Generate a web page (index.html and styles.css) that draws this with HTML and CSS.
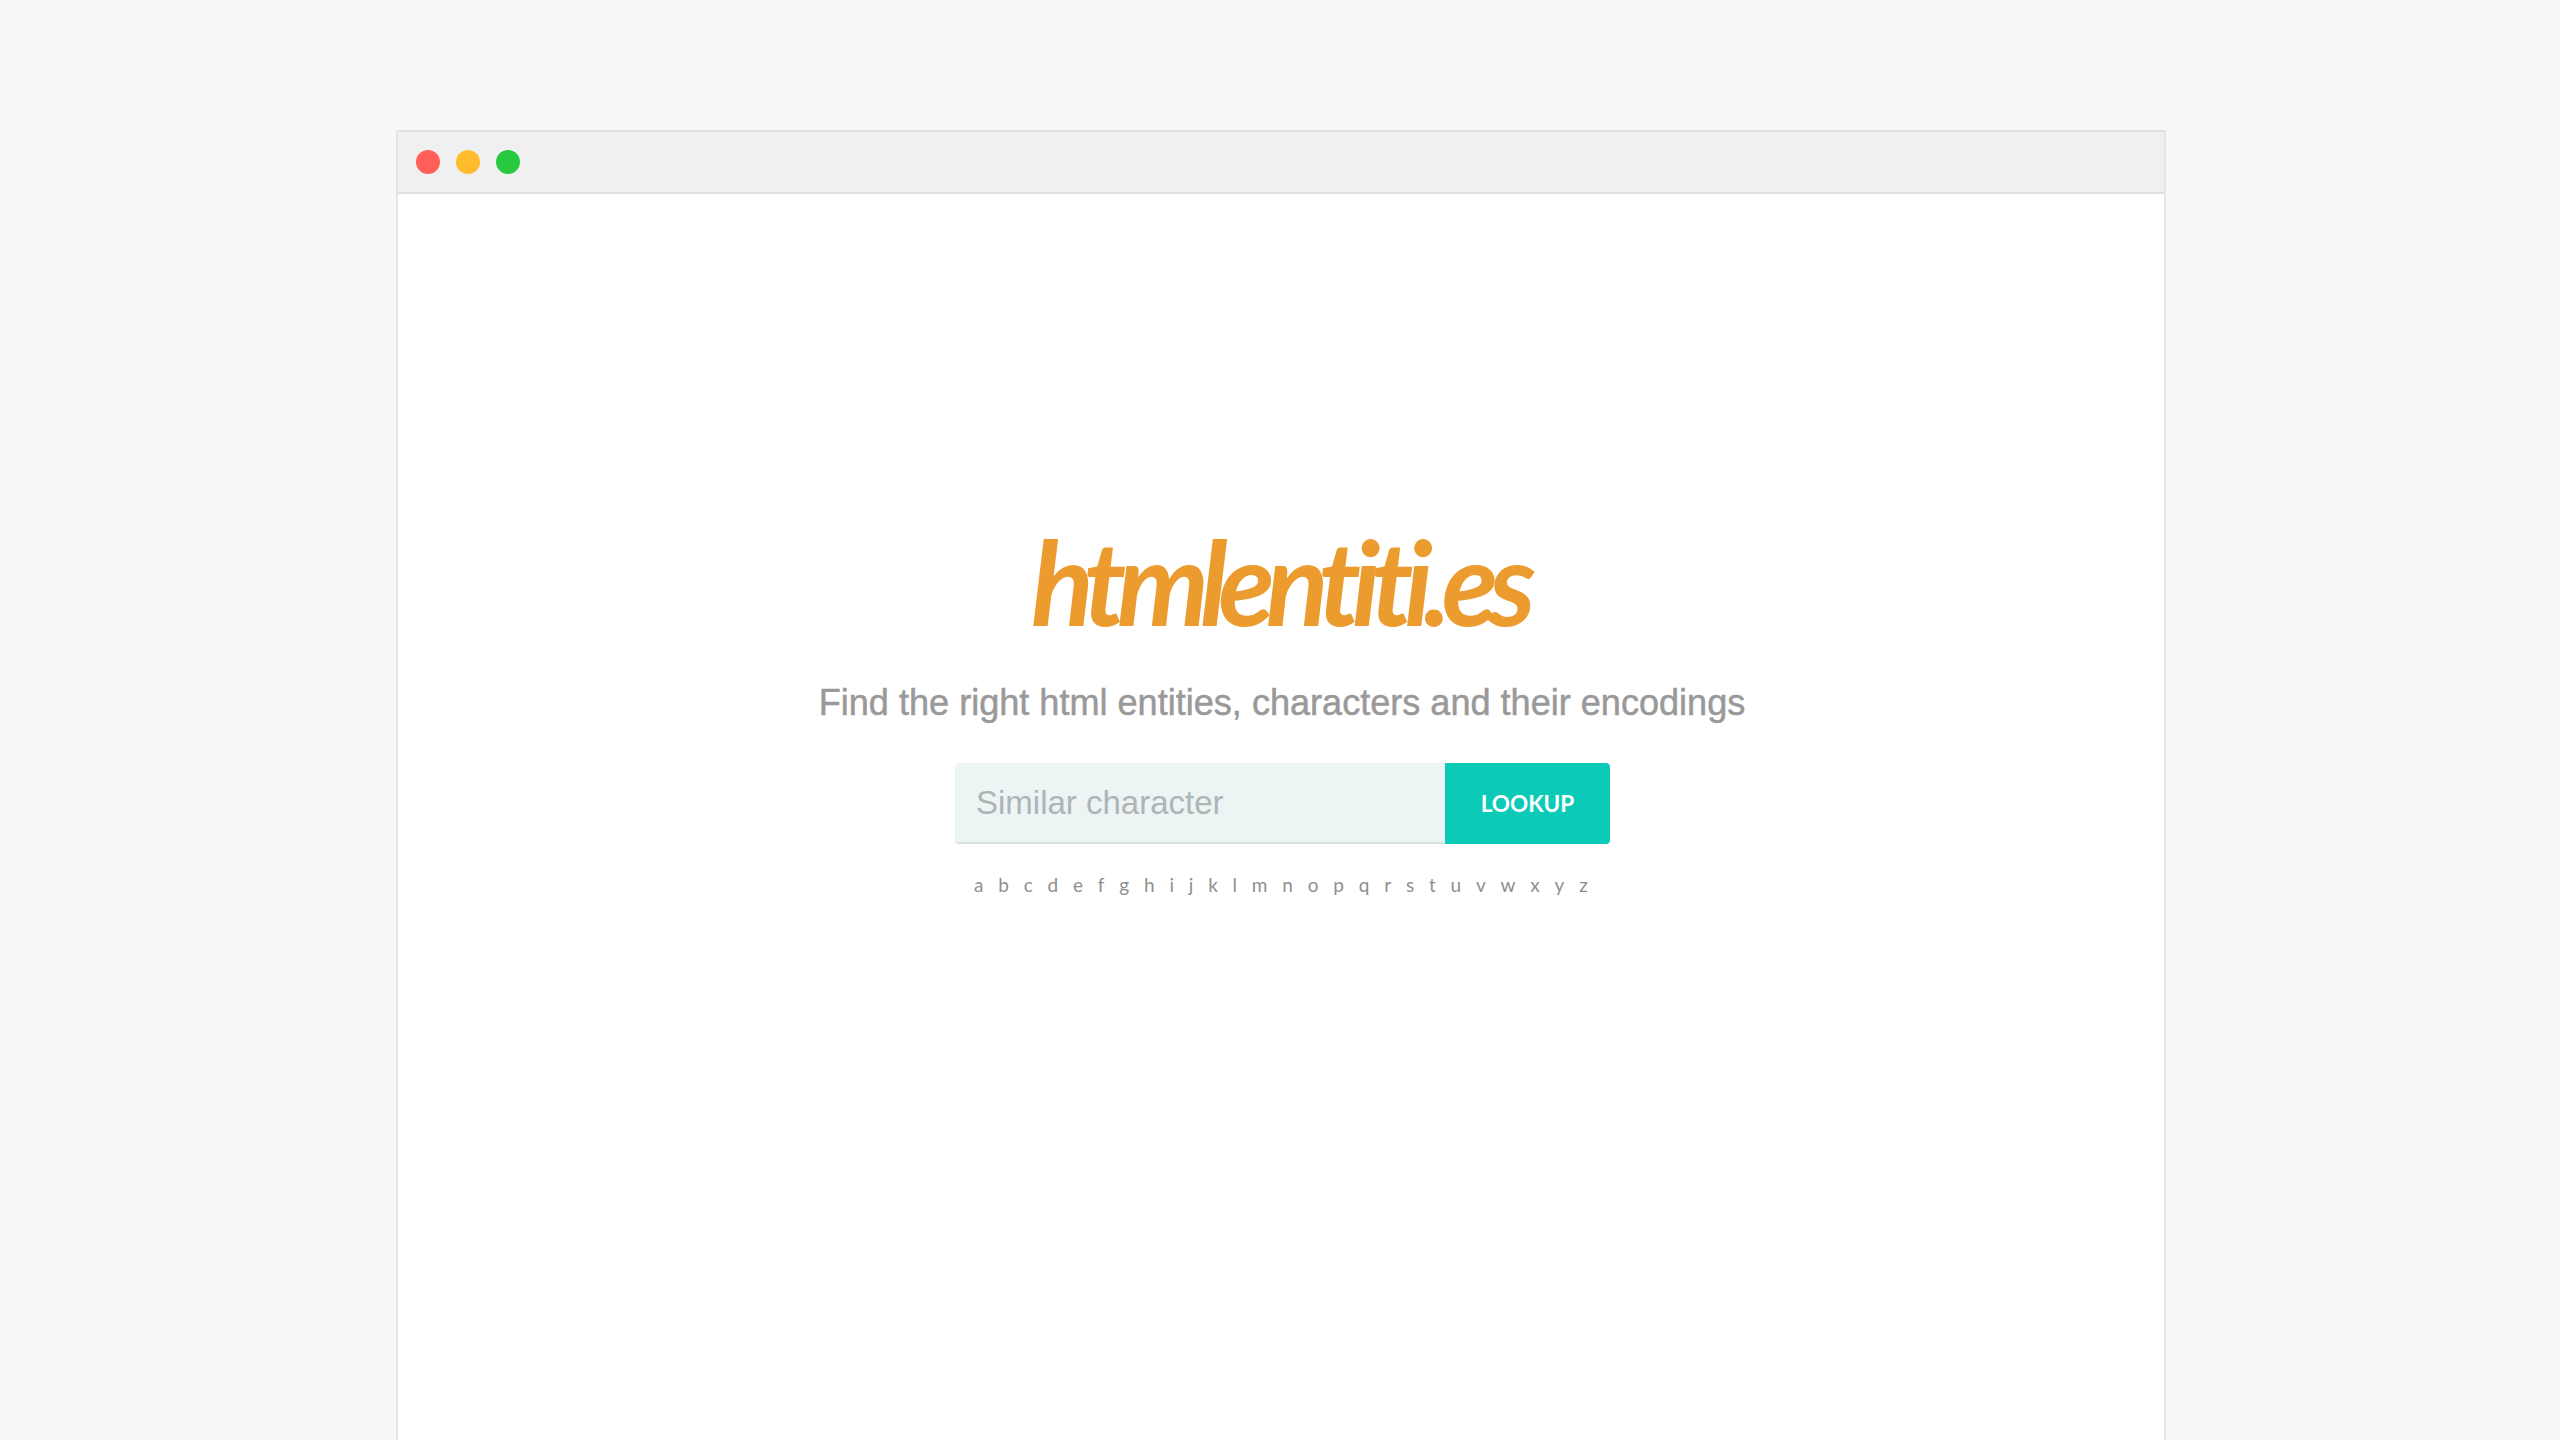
FILE: index.html
```html
<!DOCTYPE html>
<html lang="en">

<head>
    <meta charset="UTF-8">
    <title>htmlentiti.es</title>
    <link rel="stylesheet" href="styles.css">
</head>

<body>
    <div class="window">
        <div class="window-bar">
            <span class="dot red"></span>
            <span class="dot yellow"></span>
            <span class="dot green"></span>
        </div>
        <main class="window-body">
            <h1 class="logo">htmlentiti.es</h1>
            <p class="tagline">Find the right html entities, characters and their encodings</p>
            <form class="lookup">
                <input class="lookup-input" type="text" placeholder="Similar character">
                <button class="lookup-btn" type="button">LOOKUP</button>
            </form>
            <nav class="letters">
                <a>a</a><a>b</a><a>c</a><a>d</a><a>e</a><a>f</a><a>g</a><a>h</a><a>i</a><a>j</a><a>k</a><a>l</a><a>m</a>
                <a>n</a><a>o</a><a>p</a><a>q</a><a>r</a><a>s</a><a>t</a><a>u</a><a>v</a><a>w</a><a>x</a><a>y</a><a>z</a>
            </nav>
        </main>
    </div>
</body>

</html>
```

FILE: styles.css
```css
* {
    box-sizing: border-box;
}

html,
body {
    height: 100%;
}

body {
    margin: 0;
    overflow: hidden;
    background-color: #f8f8f8;
    font-family: "Liberation Sans", Arial, sans-serif;
}

.window {
    width: 1770px;
    height: 1310px;
    margin: 130px 0 0 396px;
    background-color: #fff;
    border: 2px solid #e6e6e6;
    border-top-color: #e0e0e0;
    border-bottom: none;
}

.window-bar {
    height: 62px;
    padding-left: 18px;
    display: flex;
    align-items: center;
    gap: 16px;
    background-color: #f0f0f0;
    border-bottom: 2px solid #e0e0e0;
}

.dot {
    width: 24px;
    height: 24px;
    border-radius: 50%;
}

.dot.red {
    background-color: #ff5f57;
}

.dot.yellow {
    background-color: #ffbd2e;
}

.dot.green {
    background-color: #28c940;
}

.window-body {
    padding-top: 330px;
    display: flex;
    flex-direction: column;
    align-items: center;
}

.logo {
    margin: 0 0 0 -4px;
    font-family: Lato, sans-serif;
    font-size: 116px;
    font-weight: 700;
    font-style: italic;
    line-height: 116px;
    letter-spacing: -9.2px;
    color: #ec9c2e;
}

.tagline {
    margin: 41px 0 0 2px;
    font-size: 36.1px;
    line-height: 44px;
    color: #999;
    -webkit-text-stroke: 0.5px #999;
}

.lookup {
    margin: 38px 0 0 3px;
    display: flex;
    width: 655px;
    height: 81px;
}

.lookup-input {
    width: 490px;
    padding: 0 21px;
    border: none;
    border-bottom: 2px solid #d6e1e1;
    border-radius: 4px 0 0 4px;
    background-color: #edf4f4;
    font-family: "Liberation Sans", Arial, sans-serif;
    font-size: 33px;
    outline: none;
}

.lookup-input::placeholder {
    color: #adb5b7;
    opacity: 1;
}

.lookup-btn {
    flex-grow: 1;
    padding: 0;
    border: none;
    border-radius: 0 4px 4px 0;
    background-color: #0ccab8;
    color: #fff;
    font-family: Lato, sans-serif;
    font-size: 22.5px;
    font-weight: 700;
}

.letters {
    margin-top: 29px;
    width: 614px;
    display: flex;
    justify-content: space-between;
    font-family: Lato, sans-serif;
    font-size: 19px;
    line-height: 24px;
    color: #8f8f8f;
}
```
